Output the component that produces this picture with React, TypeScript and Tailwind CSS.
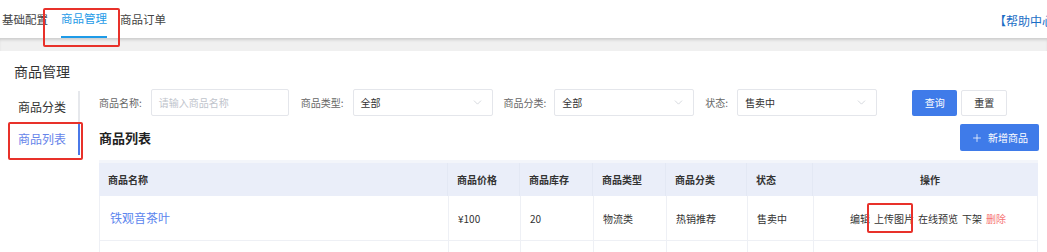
import {ChevronDown, Plus} from 'lucide-react';

const FONT = "font-['Noto_Sans_CJK_SC','Noto_Sans',sans-serif]";
const LABEL = 'text-[10px] leading-none text-[#666]';
const BOX = 'flex h-[27px] items-center rounded-[2px] border border-[#e4e6eb] bg-white px-[7px] text-[10px]';
const TH = 'flex items-center pl-[9px] text-[10px] font-bold text-[#333]';
const TD = 'flex items-center pl-[9px] text-[10px] text-[#333] border-l border-[#eef0f5]';

const COLS = 'grid grid-cols-[348px_72px_73px_73px_81px_66px_226px]';

function Select({value, width}: {value: string; width: string}) {
  return (
    <div className={`${BOX} ${width} justify-between pr-[8px]`}>
      <span className="text-[#333]">{value}</span>
      <ChevronDown size={13} strokeWidth={1.2} className="text-[#c0c4cc]" />
    </div>
  );
}

function Annot({className}: {className: string}) {
  return (
    <span
      aria-hidden
      className={`pointer-events-none absolute rounded-[2px] border-2 border-[#e8312a] ${className}`}
    />
  );
}

export default function App() {
  return (
    <div className={`${FONT} relative h-[252px] w-[1047px] overflow-hidden bg-white`}>
      {/* top tabs */}
      <header className="flex h-[38px] items-stretch">
        <nav className="flex items-stretch gap-[13px] pl-[2px] text-[11.5px]">
          <span className="flex items-center pt-[2px] text-[#444]">基础配置</span>
          <span className="flex items-center border-b-2 border-[#1e9be8] pt-[2px] text-[#1e9be8]">
            商品管理
          </span>
          <span className="flex items-center pt-[2px] text-[#444]">商品订单</span>
        </nav>
        <span className="ml-auto flex w-[53px] items-center overflow-hidden pt-[3px] text-[12px] whitespace-nowrap text-[#1b6ec5]">
          【帮助中心】
        </span>
      </header>
      <div className="h-[13px] bg-[#f0f0f0] shadow-[inset_0_3px_3px_-1px_rgba(0,0,0,0.14)]" />

      <h1 className="mt-[10px] h-[20px] pl-[14px] text-[14px] leading-[20px] text-[#333]">商品管理</h1>

      <div className="mt-[8px] flex">
        {/* sidebar */}
        <aside className="mt-[2px] w-[80px] text-[12px]">
          <div className="flex h-[32px] items-center border-r-2 border-[#e6e8ec] pl-[18px] text-[#333]">
            商品分类
          </div>
          <div className="flex h-[32px] items-center border-r-2 border-[#4a78e8] pl-[18px] text-[#6684ea]">
            商品列表
          </div>
        </aside>

        {/* content */}
        <main className="flex-1 pl-[19px] pr-[8px]">
          <div className="flex h-[27px] items-center">
            <span className={LABEL}>商品名称:</span>
            <div className={`${BOX} ml-[9px] w-[138px] text-[#c0c4cc]`}>请输入商品名称</div>
            <span className={`${LABEL} ml-[12px]`}>商品类型:</span>
            <div className="ml-[9px]">
              <Select value="全部" width="w-[140px]" />
            </div>
            <span className={`${LABEL} ml-[11px]`}>商品分类:</span>
            <div className="ml-[8px]">
              <Select value="全部" width="w-[140px]" />
            </div>
            <span className={`${LABEL} ml-[11px]`}>状态:</span>
            <div className="ml-[9px]">
              <Select value="售卖中" width="w-[140px]" />
            </div>
            <button className="ml-[35px] h-[26px] w-[45px] rounded-[2px] bg-[#3f7be9] text-[10px] text-white">
              查询
            </button>
            <button className="ml-[4px] h-[26px] w-[46px] rounded-[2px] border border-[#e4e6eb] bg-white text-[10px] text-[#333]">
              重置
            </button>
          </div>

          <div className="mt-[8px] flex h-[27px] items-center justify-between">
            <h2 className="text-[13px] font-bold text-[#222]">商品列表</h2>
            <button className="flex h-[27px] w-[79px] items-center justify-center gap-[5px] rounded-[2px] bg-[#3f7be9] text-[10px] text-white">
              <Plus size={12} strokeWidth={1.5} />
              新增商品
            </button>
          </div>

          {/* table */}
          <div className="mt-[9px] w-[939px] border-t-[3px] border-[#f3f5fa]">
            <div className={`${COLS} h-[33px] bg-[#eaeef9]`}>
              <span className={TH}>商品名称</span>
              <span className={`${TH} border-l border-[#e3e8f4]`}>商品价格</span>
              <span className={`${TH} border-l border-[#e3e8f4]`}>商品库存</span>
              <span className={`${TH} border-l border-[#e3e8f4]`}>商品类型</span>
              <span className={`${TH} border-l border-[#e3e8f4]`}>商品分类</span>
              <span className={`${TH} border-l border-[#e3e8f4]`}>状态</span>
              <span className={`${TH} justify-center border-l border-[#e3e8f4] pl-0`}>操作</span>
            </div>
            <div className={`${COLS} h-[45px] border-b border-l border-r border-[#eef0f5]`}>
              <span className="flex items-center pl-[10px] text-[12px] text-[#5c86ee]">铁观音茶叶</span>
              <span className={TD}>¥100</span>
              <span className={TD}>20</span>
              <span className={TD}>物流类</span>
              <span className={TD}>热销推荐</span>
              <span className={TD}>售卖中</span>
              <span className={`${TD} justify-center gap-[4px] pl-0 pr-[6px] text-[9.5px] text-[#5d80f0]`}>
                <span>编辑</span>
                <span>上传图片</span>
                <span>在线预览</span>
                <span>下架</span>
                <span className="text-[#f67575]">删除</span>
              </span>
            </div>
            <div className={`${COLS} h-[45px] border-l border-r border-[#eef0f5]`}>
              <span />
              <span className={TD} />
              <span className={TD} />
              <span className={TD} />
              <span className={TD} />
              <span className={TD} />
              <span className={TD} />
            </div>
          </div>
        </main>
      </div>

      {/* red annotation boxes */}
      <Annot className="left-[43px] top-[8px] h-[39px] w-[77px]" />
      <Annot className="left-[8px] top-[122px] h-[38px] w-[75px]" />
      <Annot className="left-[867px] top-[203px] h-[30px] w-[46px]" />
    </div>
  );
}
